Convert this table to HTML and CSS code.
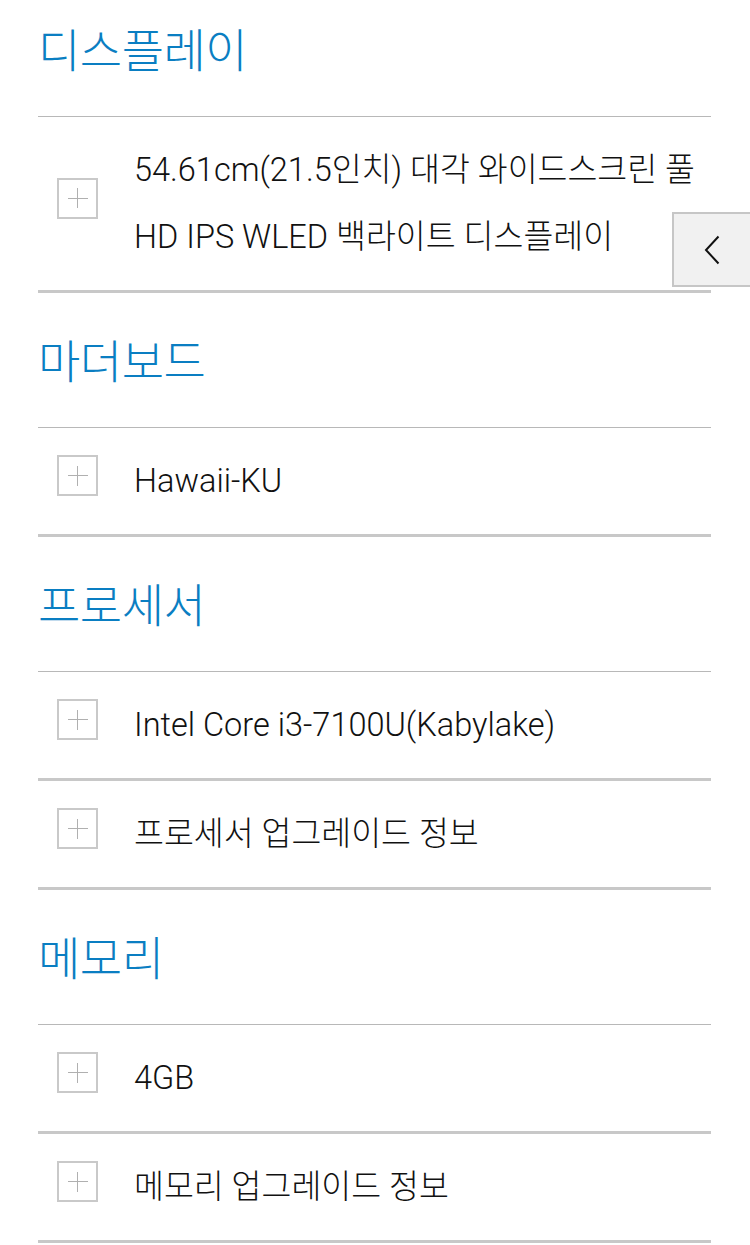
FILE: index.html
```html
<!DOCTYPE html>
<html lang="ko">
<head>
<meta charset="utf-8">
<title>사양</title>
<link rel="stylesheet" href="styles.css">
</head>
<body>
<main class="specs">
  <section class="group">
    <h2 class="group-title">디스플레이</h2>
    <ul class="items">
      <li class="item"><span class="toggle"></span><span class="item-text">54.61cm(21.5인치) 대각 와이드스크린 풀 HD IPS WLED 백라이트 디스플레이</span></li>
    </ul>
  </section>
  <section class="group">
    <h2 class="group-title">마더보드</h2>
    <ul class="items">
      <li class="item"><span class="toggle"></span><span class="item-text">Hawaii-KU</span></li>
    </ul>
  </section>
  <section class="group">
    <h2 class="group-title">프로세서</h2>
    <ul class="items">
      <li class="item"><span class="toggle"></span><span class="item-text">Intel Core i3-7100U(Kabylake)</span></li>
      <li class="item"><span class="toggle"></span><span class="item-text">프로세서 업그레이드 정보</span></li>
    </ul>
  </section>
  <section class="group">
    <h2 class="group-title">메모리</h2>
    <ul class="items">
      <li class="item"><span class="toggle"></span><span class="item-text">4GB</span></li>
      <li class="item"><span class="toggle"></span><span class="item-text">메모리 업그레이드 정보</span></li>
    </ul>
  </section>
</main>
<button class="side-tab" type="button" aria-label="열기">
  <svg width="16" height="30" viewBox="0 0 16 30"><path d="M14.5 1.5 L2 15 L14.5 28.5" fill="none" stroke="#111" stroke-width="2"/></svg>
</button>
</body>
</html>
```
FILE: styles.css
```css
html, body {
  margin: 0;
  padding: 0;
  background: #fff;
}
body {
  font-family: Roboto, "Noto Sans CJK KR", "Noto Sans", sans-serif;
  color: #111;
  overflow: hidden;
}
.specs {
  width: 673px;
  margin: -18px 0 0 38px;
}
.group-title {
  margin: 0;
  height: 134px;
  display: flex;
  align-items: center;
  padding-bottom: 4px;
  box-sizing: border-box;
  font-family: "Noto Sans CJK KR", sans-serif;
  font-size: 46px;
  font-weight: 300;
  color: #0a7ec2;
  letter-spacing: -0.5px;
}
.items {
  list-style: none;
  margin: 0;
  padding: 0;
  border-top: 1px solid #b8b8b8;
}
.item {
  display: flex;
  align-items: center;
  padding: 20px 0 19px 19px;
  border-bottom: 3px solid #c8c8c8;
}
.toggle {
  flex: none;
  width: 41px;
  height: 41px;
  box-sizing: border-box;
  border: 2px solid #c9c9c9;
  margin: 0 36px 12px 0;
  background:
    linear-gradient(#b0b0b0, #b0b0b0) center / 20px 1px no-repeat,
    linear-gradient(#b0b0b0, #b0b0b0) center / 1px 20px no-repeat;
}
.item-text {
  font-size: 32.5px;
  font-weight: 300;
  line-height: 67px;
}
.side-tab {
  position: absolute;
  left: 672px;
  top: 212px;
  width: 90px;
  height: 75px;
  box-sizing: border-box;
  background: #f1f1f1;
  border: 2px solid #c6c6c6;
  border-right: none;
  padding: 0 0 0 30px;
  display: flex;
  align-items: center;
}
.side-tab svg {
  display: block;
}
```
